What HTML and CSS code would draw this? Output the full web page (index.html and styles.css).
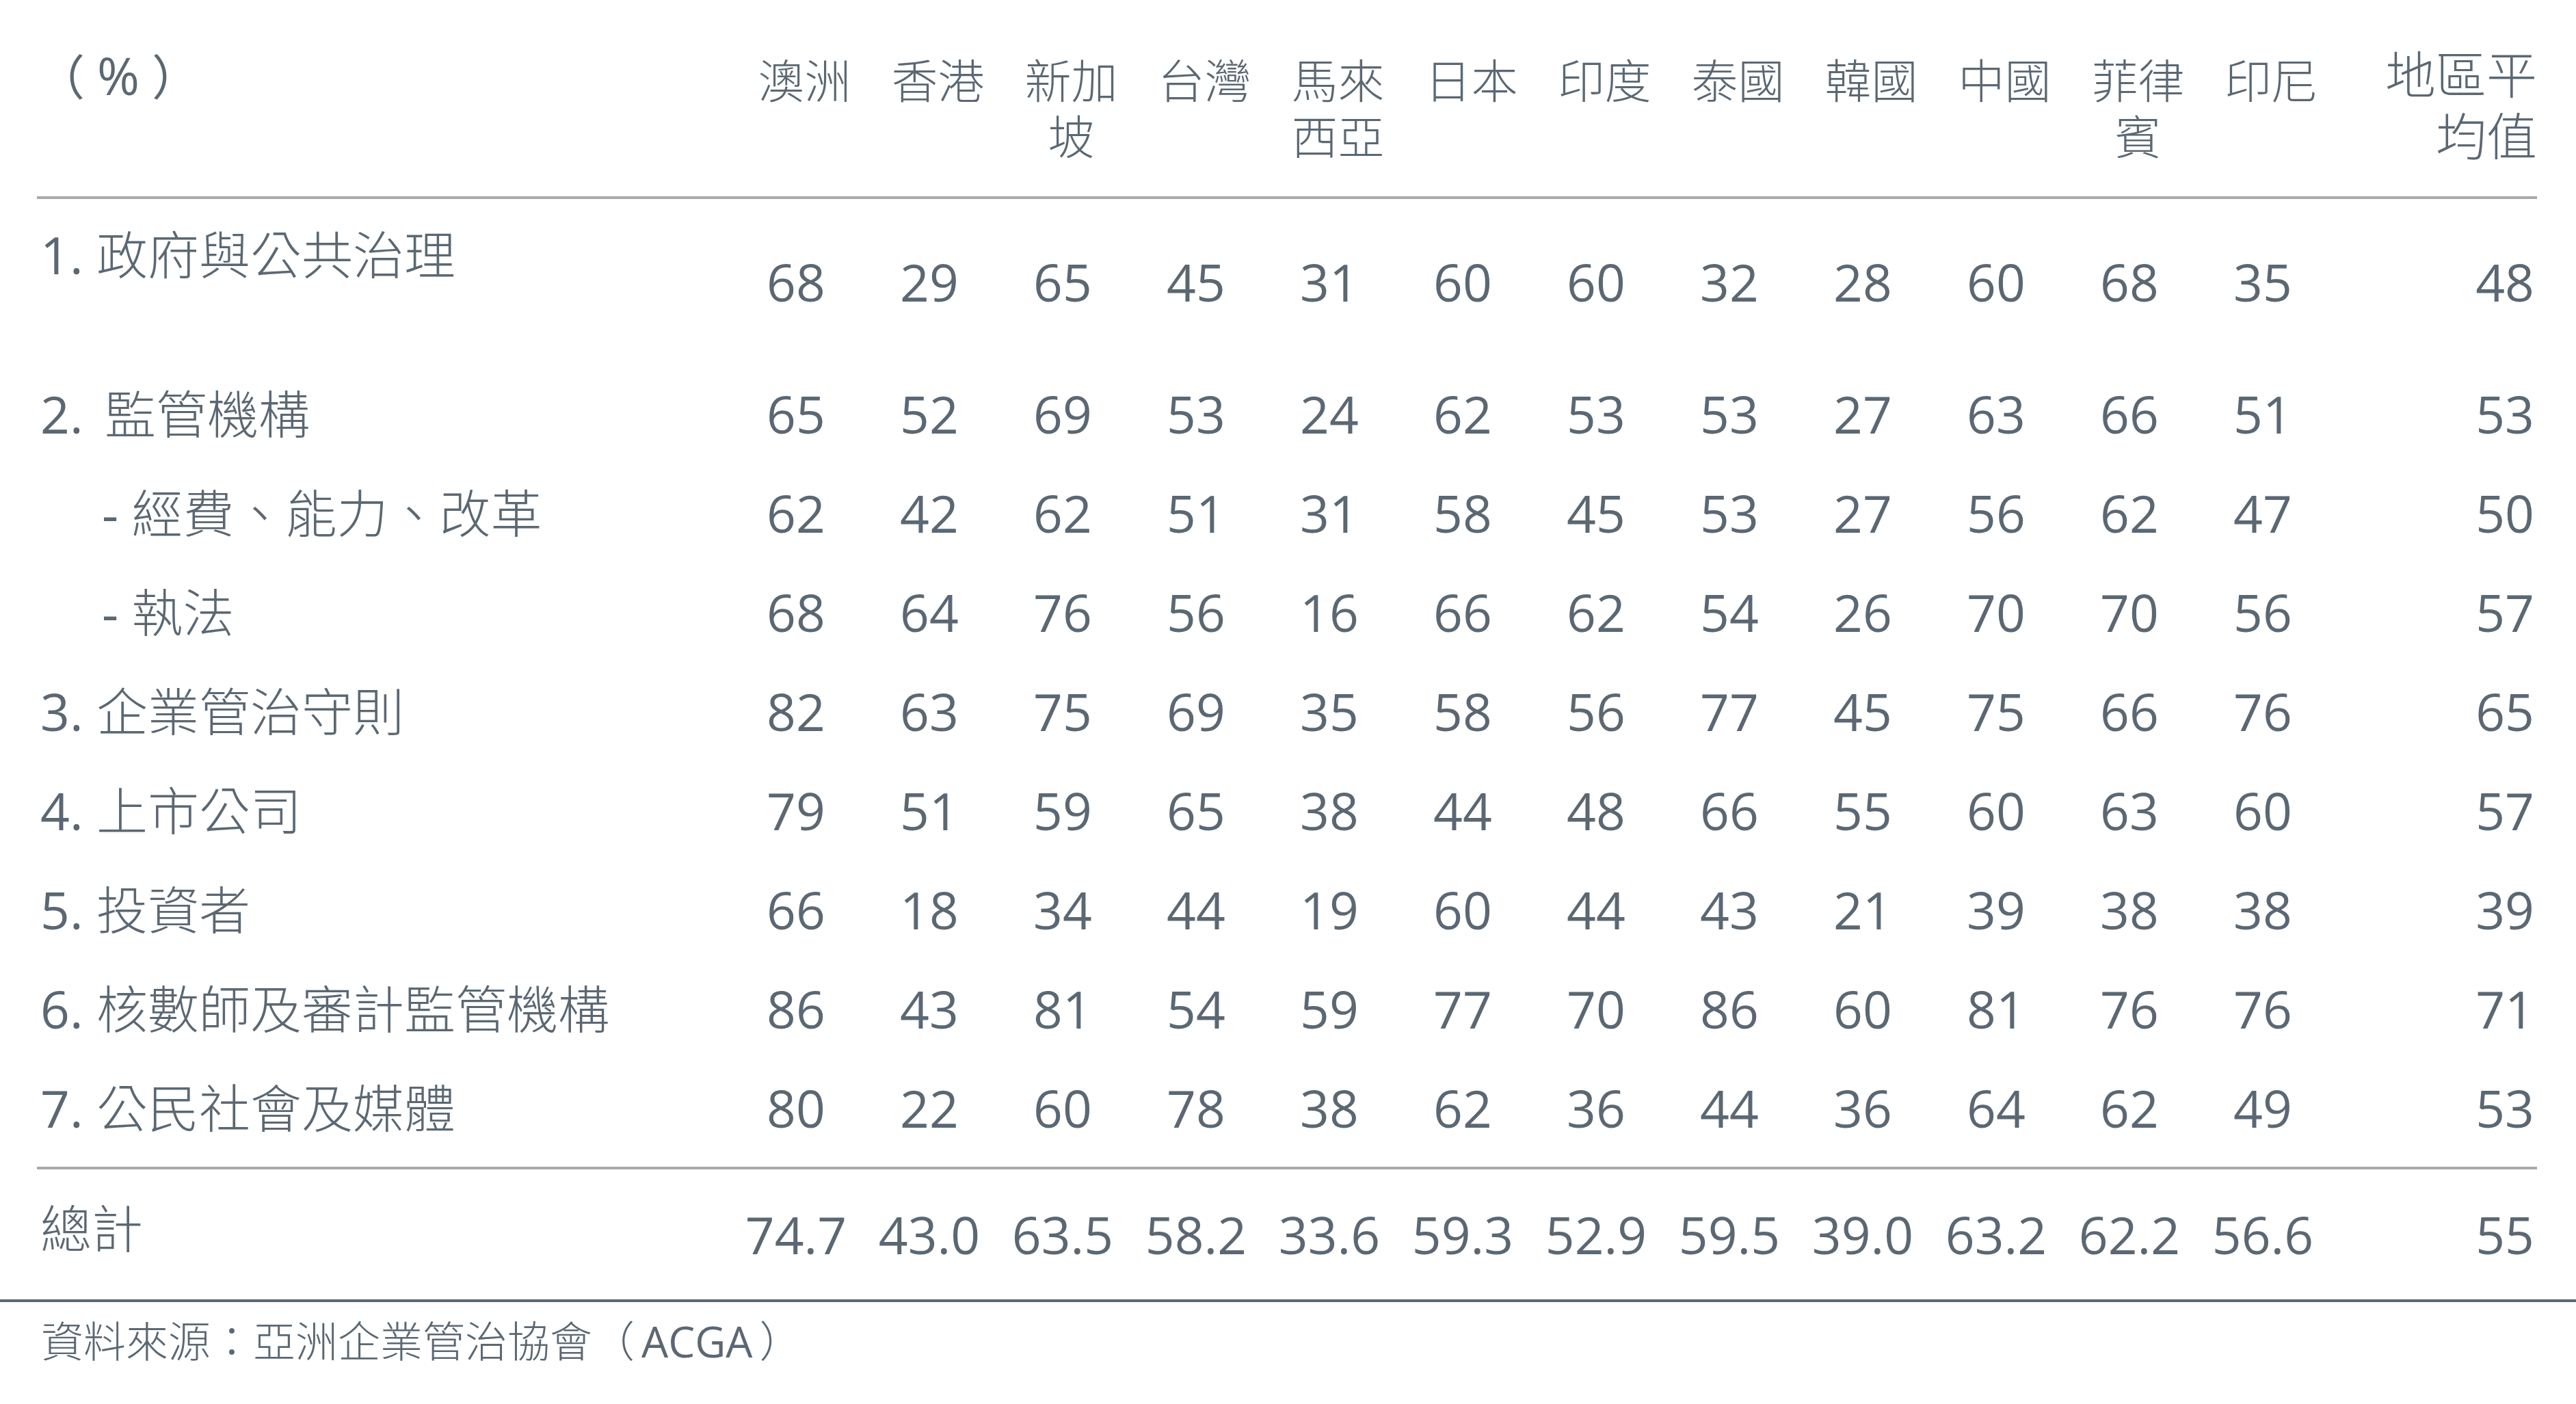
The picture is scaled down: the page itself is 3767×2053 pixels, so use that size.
FILE: index.html
```html
<!DOCTYPE html>
<html lang="zh-Hant">
<head>
<meta charset="utf-8">
<title>企業管治評分</title>
<link rel="stylesheet" href="styles.css">
</head>
<body>
<div class="table">
  <div class="head">
    <div class="h-unit">（<span class="pct">%</span>）</div>
    <div class="h-c">澳洲</div>
    <div class="h-c">香港</div>
    <div class="h-c">新加<br>坡</div>
    <div class="h-c">台灣</div>
    <div class="h-c">馬來<br>西亞</div>
    <div class="h-c">日本</div>
    <div class="h-c">印度</div>
    <div class="h-c">泰國</div>
    <div class="h-c">韓國</div>
    <div class="h-c">中國</div>
    <div class="h-c">菲律<br>賓</div>
    <div class="h-c">印尼</div>
    <div class="h-avg">地區平<br>均值</div>
  </div>

  <div class="row row-first">
    <div class="lbl lbl-top"><span class="no">1.</span> 政府與公共治理</div>
    <div class="n">68</div><div class="n">29</div><div class="n">65</div><div class="n">45</div><div class="n">31</div><div class="n">60</div><div class="n">60</div><div class="n">32</div><div class="n">28</div><div class="n">60</div><div class="n">68</div><div class="n">35</div><div class="avg">48</div>
  </div>
  <div class="row">
    <div class="lbl"><span class="no no-wide">2.</span> 監管機構</div>
    <div class="n">65</div><div class="n">52</div><div class="n">69</div><div class="n">53</div><div class="n">24</div><div class="n">62</div><div class="n">53</div><div class="n">53</div><div class="n">27</div><div class="n">63</div><div class="n">66</div><div class="n">51</div><div class="avg">53</div>
  </div>
  <div class="row">
    <div class="lbl sub"><span class="no">-</span> 經費、能力、改革</div>
    <div class="n">62</div><div class="n">42</div><div class="n">62</div><div class="n">51</div><div class="n">31</div><div class="n">58</div><div class="n">45</div><div class="n">53</div><div class="n">27</div><div class="n">56</div><div class="n">62</div><div class="n">47</div><div class="avg">50</div>
  </div>
  <div class="row">
    <div class="lbl sub"><span class="no">-</span> 執法</div>
    <div class="n">68</div><div class="n">64</div><div class="n">76</div><div class="n">56</div><div class="n">16</div><div class="n">66</div><div class="n">62</div><div class="n">54</div><div class="n">26</div><div class="n">70</div><div class="n">70</div><div class="n">56</div><div class="avg">57</div>
  </div>
  <div class="row">
    <div class="lbl"><span class="no">3.</span> 企業管治守則</div>
    <div class="n">82</div><div class="n">63</div><div class="n">75</div><div class="n">69</div><div class="n">35</div><div class="n">58</div><div class="n">56</div><div class="n">77</div><div class="n">45</div><div class="n">75</div><div class="n">66</div><div class="n">76</div><div class="avg">65</div>
  </div>
  <div class="row">
    <div class="lbl"><span class="no">4.</span> 上市公司</div>
    <div class="n">79</div><div class="n">51</div><div class="n">59</div><div class="n">65</div><div class="n">38</div><div class="n">44</div><div class="n">48</div><div class="n">66</div><div class="n">55</div><div class="n">60</div><div class="n">63</div><div class="n">60</div><div class="avg">57</div>
  </div>
  <div class="row">
    <div class="lbl"><span class="no">5.</span> 投資者</div>
    <div class="n">66</div><div class="n">18</div><div class="n">34</div><div class="n">44</div><div class="n">19</div><div class="n">60</div><div class="n">44</div><div class="n">43</div><div class="n">21</div><div class="n">39</div><div class="n">38</div><div class="n">38</div><div class="avg">39</div>
  </div>
  <div class="row">
    <div class="lbl"><span class="no">6.</span> 核數師及審計監管機構</div>
    <div class="n">86</div><div class="n">43</div><div class="n">81</div><div class="n">54</div><div class="n">59</div><div class="n">77</div><div class="n">70</div><div class="n">86</div><div class="n">60</div><div class="n">81</div><div class="n">76</div><div class="n">76</div><div class="avg">71</div>
  </div>
  <div class="row row-last">
    <div class="lbl"><span class="no">7.</span> 公民社會及媒體</div>
    <div class="n">80</div><div class="n">22</div><div class="n">60</div><div class="n">78</div><div class="n">38</div><div class="n">62</div><div class="n">36</div><div class="n">44</div><div class="n">36</div><div class="n">64</div><div class="n">62</div><div class="n">49</div><div class="avg">53</div>
  </div>

  <div class="row row-total">
    <div class="lbl lbl-total">總計</div>
    <div class="n">74.7</div><div class="n">43.0</div><div class="n">63.5</div><div class="n">58.2</div><div class="n">33.6</div><div class="n">59.3</div><div class="n">52.9</div><div class="n">59.5</div><div class="n">39.0</div><div class="n">63.2</div><div class="n">62.2</div><div class="n">56.6</div><div class="avg">55</div>
  </div>
</div>
<div class="source">資料來源：亞洲企業管治協會（<span class="latin">ACGA</span>）</div>
</body>
</html>
```

FILE: styles.css
```css
html, body {
  margin: 0;
  padding: 0;
  background: #ffffff;
}

body {
  font-family: "Open Sans", "Noto Sans CJK TC", sans-serif;
  color: #5b6873;
  width: 3767px;
}

.table {
  margin-left: 54px;
  width: 3656px;
}

.head,
.row {
  display: grid;
  grid-template-columns: 1012.5px repeat(12, 195px) 1fr;
}

.head {
  height: 291px;
  box-sizing: border-box;
  border-bottom: 4px solid #a9a9a9;
  align-items: start;
}

.h-unit {
  font-size: 70px;
  line-height: 82px;
  padding-top: 69px;
  padding-left: 0;
  white-space: nowrap;
  font-weight: 400;
}

.pct {
  font-size: 75px;
  margin: 0 18px;
}

.h-c {
  font-size: 68px;
  line-height: 82px;
  padding-top: 77px;
  padding-left: 25px;
  text-align: center;
  white-space: nowrap;
  font-weight: 300;
}

.h-avg {
  font-size: 74px;
  line-height: 90px;
  padding-top: 64px;
  text-align: right;
  white-space: nowrap;
  font-weight: 300;
}

.row {
  height: 145px;
  align-items: center;
  font-size: 75px;
  line-height: 100px;
}

.row-first {
  height: 241.5px;
}

.row-last {
  margin-bottom: 13.5px;
}

.row-total {
  height: 194px;
  box-sizing: border-box;
  border-top: 4px solid #a9a9a9;
}

.lbl {
  padding-left: 5px;
  white-space: nowrap;
  font-weight: 300;
}

.no {
  font-weight: 400;
}

.no-wide {
  margin-right: 12px;
}

.lbl-top {
  align-self: start;
  margin-top: 31px;
}

.lbl-total {
  margin-bottom: 18px;
}

.sub {
  padding-left: 95px;
}

.n {
  text-align: center;
}

.avg {
  text-align: right;
  padding-right: 4px;
}

.source {
  border-top: 4px solid #5b6873;
  padding-left: 60px;
  font-size: 62px;
  line-height: 114px;
  white-space: nowrap;
  font-weight: 300;
}

.latin {
  font-weight: 400;
  margin: 0 10px;
}
```
